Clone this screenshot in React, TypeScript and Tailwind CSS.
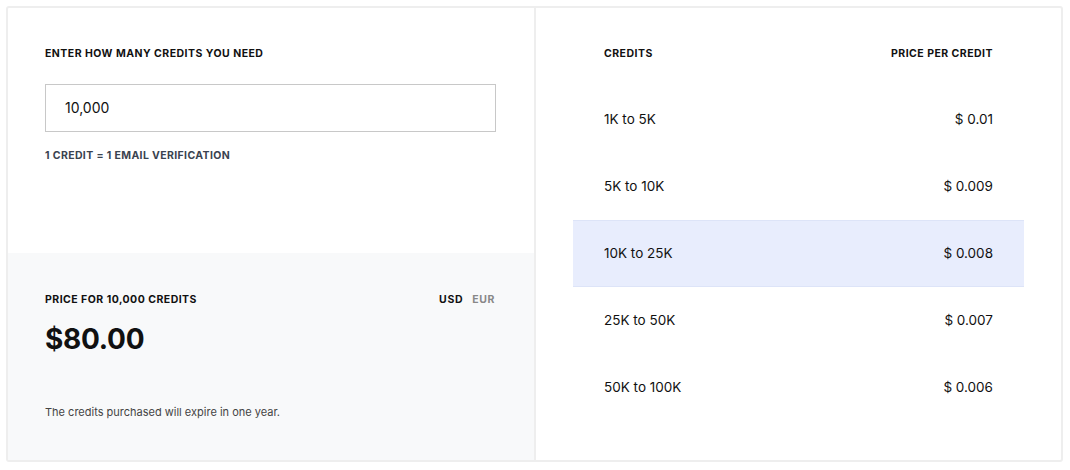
const tiers = [
  { range: '1K to 5K', price: '$ 0.01', active: false },
  { range: '5K to 10K', price: '$ 0.009', active: false },
  { range: '10K to 25K', price: '$ 0.008', active: true },
  { range: '25K to 50K', price: '$ 0.007', active: false },
  { range: '50K to 100K', price: '$ 0.006', active: false },
]

export default function App() {
  return (
    <div
      className="w-[1070px] h-[470px] bg-white p-[6px] pr-[7px] text-[#111]"
      style={{ fontFamily: 'Inter, "Open Sans", sans-serif' }}
    >
      <div className="flex h-[456px] border-2 border-[#eeeeee] rounded-[3px]">
        {/* Left: calculator */}
        <div className="w-[528px] flex flex-col border-r-2 border-[#eeeeee]">
          <div className="h-[245px] pl-[37px] pr-[36px] pt-[38px]">
            <div className="text-[10.5px] font-bold tracking-[0.045em] uppercase">
              Enter how many credits you need
            </div>
            <input
              defaultValue="10,000"
              className="mt-[22px] w-[451px] h-[48px] border border-[#c8c8c8] px-[19px] text-[14px] text-[#111] outline-none"
            />
            <div className="mt-[16px] text-[10.5px] font-bold tracking-[0.035em] text-[#3a4350] uppercase">
              1 credit = 1 email verification
            </div>
          </div>
          <div className="flex-1 bg-[#f8f9fa] pl-[37px] pr-[39px] pt-[39px]">
            <div className="flex justify-between items-center">
              <div className="text-[10.5px] font-bold tracking-[0.045em] uppercase">
                Price for 10,000 credits
              </div>
              <div className="flex gap-[9px] text-[10.5px] font-bold tracking-[0.06em]">
                <span>USD</span>
                <span className="text-[#888]">EUR</span>
              </div>
            </div>
            <div className="mt-[10px] text-[28px] font-bold tracking-[-0.01em]">$80.00</div>
            <div className="mt-[44px] text-[11px] text-[#444]">
              The credits purchased will expire in one year.
            </div>
          </div>
        </div>

        {/* Right: price tiers */}
        <div className="flex-1 pt-[38px] pl-[37px] pr-[37px]">
          <div className="flex justify-between px-[31px] text-[10.5px] font-bold tracking-[0.045em] uppercase">
            <span>Credits</span>
            <span>Price per credit</span>
          </div>
          <div className="mt-[24px]">
            {tiers.map((t) => (
              <div
                key={t.range}
                className={`flex justify-between items-center h-[67px] px-[31px] text-[13.5px] ${
                  t.active ? 'bg-[#e8edfd] border-y border-[#dde4f8]' : ''
                }`}
              >
                <span>{t.range}</span>
                <span>{t.price}</span>
              </div>
            ))}
          </div>
        </div>
      </div>
    </div>
  )
}
